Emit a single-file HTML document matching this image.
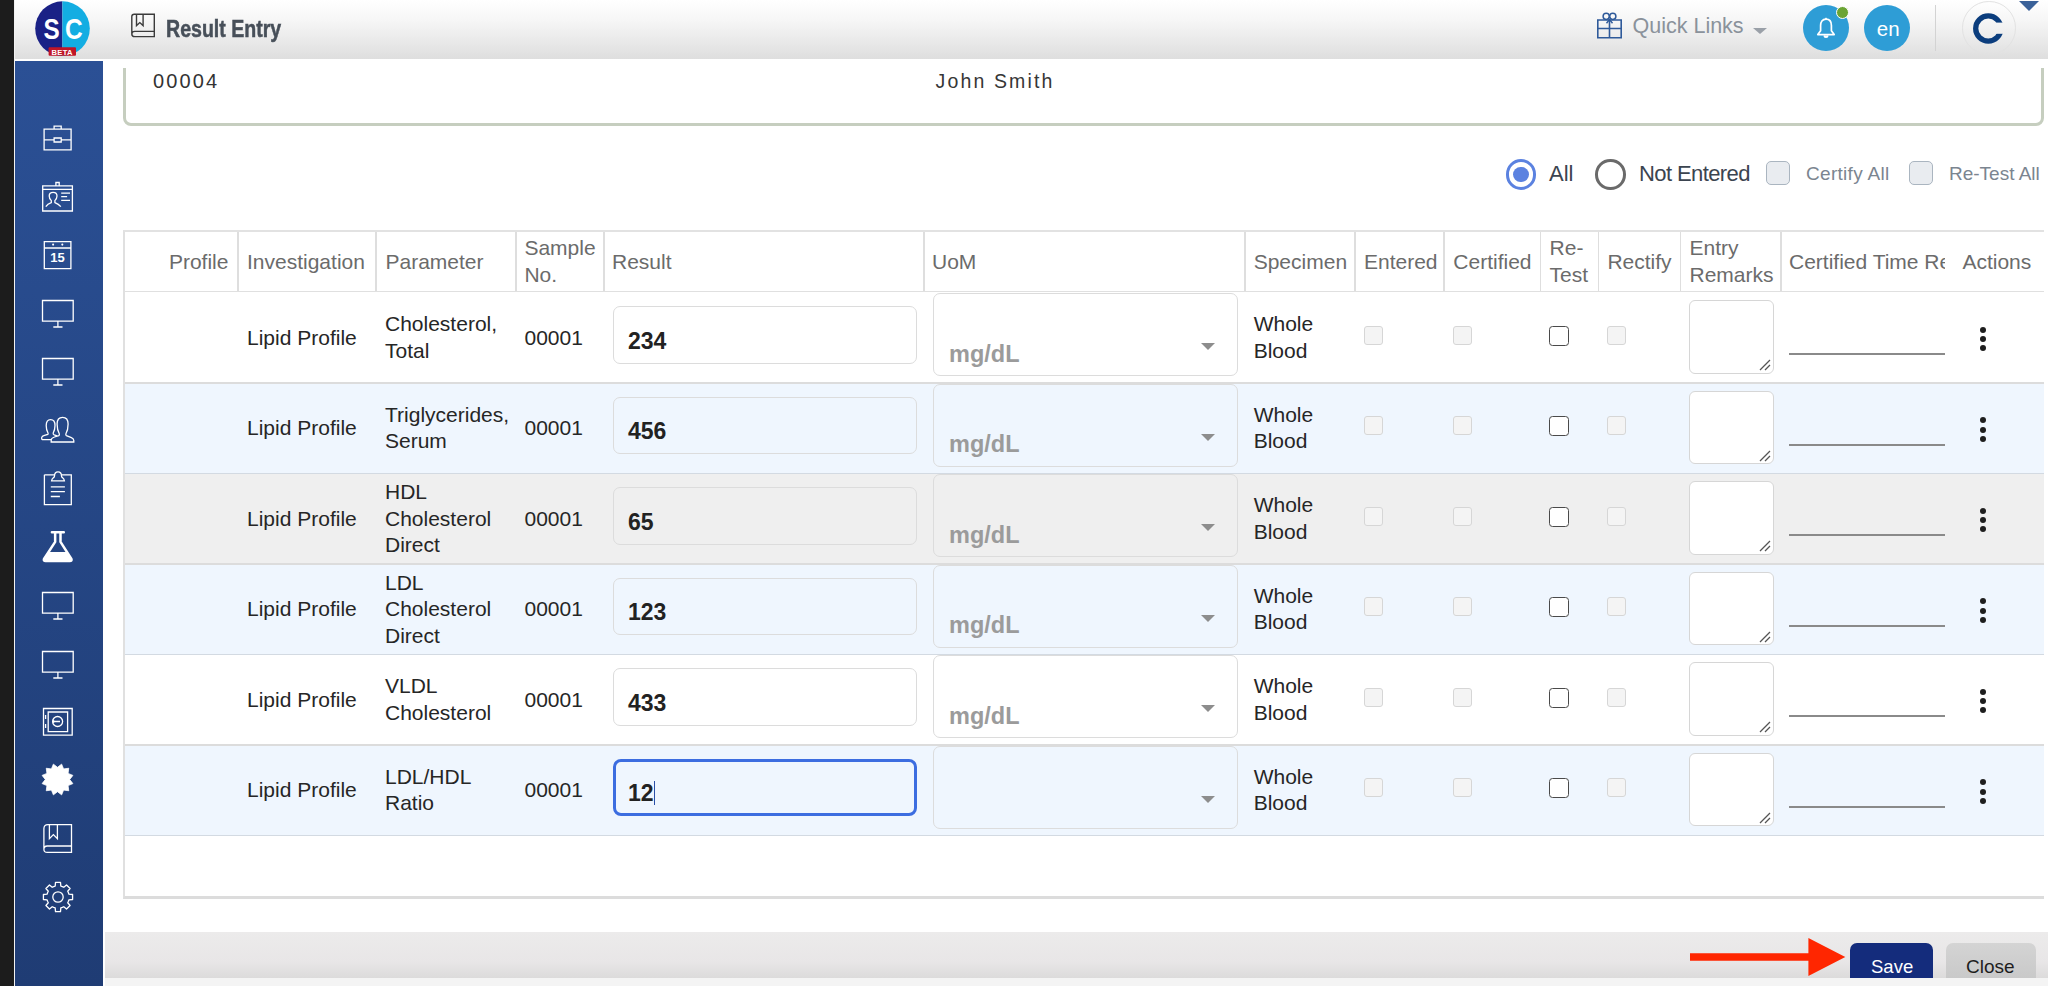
<!DOCTYPE html>
<html><head><meta charset="utf-8"><title>Result Entry</title>
<style>
*{box-sizing:border-box;margin:0;padding:0}
html,body{width:2048px;height:986px;overflow:hidden;background:#fff;font-family:"Liberation Sans",sans-serif;}
.a{position:absolute}
.t{position:absolute;white-space:nowrap;font-size:21px;line-height:26.4px;color:#262626}
.h{color:#6b6b6b;line-height:27px}
.vl{position:absolute;top:232px;width:1.6px;height:59px;background:#dedede}
.cbd{position:absolute;width:19px;height:19px;border:1.5px solid #d6d6d6;background:#f4f4f4;border-radius:3px}
.cbe{position:absolute;width:20px;height:20px;border:1.7px solid #4a4a4a;background:#fff;border-radius:3.5px}
.inp{position:absolute;left:612.5px;width:304.5px;height:57.5px;border:1.5px solid #dcdcdc;border-radius:7px}
.sel{position:absolute;left:933px;width:304.5px;height:83px;border:1.5px solid #dcdcdc;border-radius:7px}
.ta{position:absolute;left:1689px;width:84.5px;height:73.5px;border:1.7px solid #d6d6d6;border-radius:6px;background:#fff}
.ul{position:absolute;left:1789px;width:156px;height:2px;background:#8a8a8a}
.dot{position:absolute;width:6px;height:6px;border-radius:50%;background:#1e1e1e}
.tri{position:absolute;width:0;height:0;border-left:7.5px solid transparent;border-right:7.5px solid transparent;border-top:7.5px solid #8d8d8d}
.ic{position:absolute;left:57.5px}
</style></head><body>

<div class="a" style="left:0;top:0;width:14px;height:986px;background:#1c1c1c"></div>
<div class="a" style="left:14px;top:0;width:1px;height:986px;background:#f2f2f2"></div>
<div class="a" style="left:15px;top:61px;width:88px;height:925px;background:linear-gradient(#2b5095,#1f3c74)"></div>
<div class="a" style="left:123px;top:40px;width:1921px;height:86px;border:3px solid #c6cebf;border-radius:8px"></div>
<div class="a" style="left:103px;top:59px;width:1945px;height:9px;background:#fff"></div>
<div class="t" style="left:153px;top:67.5px;font-size:20px;letter-spacing:2.1px;color:#333">00004</div>
<div class="t" style="left:935.5px;top:68.2px;font-size:19.5px;letter-spacing:2.15px;color:#363636">John Smith</div>
<div class="a" style="left:15px;top:0;width:2033px;height:59px;background:linear-gradient(#ffffff 0%,#f6f6f6 35%,#dedede 100%)"></div>
<div class="a" style="left:1505.5px;top:159px;width:30.5px;height:30.5px;border:3px solid #5b82e0;border-radius:50%"></div>
<div class="a" style="left:1513px;top:166.5px;width:15.5px;height:15.5px;background:#5b82e0;border-radius:50%"></div>
<div class="t" style="left:1549px;top:160px;font-size:22px;line-height:27px;color:#3b4450">All</div>
<div class="a" style="left:1595px;top:159px;width:30.5px;height:30.5px;border:3px solid #6a6a6a;border-radius:50%"></div>
<div class="t" style="left:1639px;top:160px;font-size:22px;line-height:27px;color:#3b4450;letter-spacing:-0.6px">Not Entered</div>
<div class="a" style="left:1765.5px;top:160.5px;width:24px;height:24px;border:1.6px solid #aab5c0;background:#e9ecf0;border-radius:5px"></div>
<div class="t" style="left:1806px;top:161.5px;font-size:19px;line-height:24px;color:#7b8590;letter-spacing:0.3px">Certify All</div>
<div class="a" style="left:1909px;top:160.5px;width:24px;height:24px;border:1.6px solid #aab5c0;background:#e9ecf0;border-radius:5px"></div>
<div class="t" style="left:1949px;top:161.5px;font-size:19px;line-height:24px;color:#7b8590;letter-spacing:0px">Re-Test All</div>
<div class="a" style="left:123px;top:230px;width:1920.5px;height:669px;border-left:2px solid #e0e0e0;border-top:2px solid #e2e2e2;border-bottom:3px solid #dcdcdc"></div>
<div class="a" style="left:125px;top:290.5px;width:1918.5px;height:2px;background:#e0e0e0"></div>
<div class="vl" style="left:237px"></div>
<div class="vl" style="left:375px"></div>
<div class="vl" style="left:515px"></div>
<div class="vl" style="left:603px"></div>
<div class="vl" style="left:923px"></div>
<div class="vl" style="left:1244px"></div>
<div class="vl" style="left:1354px"></div>
<div class="vl" style="left:1443px"></div>
<div class="vl" style="left:1539.5px"></div>
<div class="vl" style="left:1597.5px"></div>
<div class="vl" style="left:1679.5px"></div>
<div class="vl" style="left:1780px"></div>
<div class="t h" style="left:168.9px;top:248.2px">Profile</div>
<div class="t h" style="left:247px;top:248.2px">Investigation</div>
<div class="t h" style="left:385.5px;top:248.2px">Parameter</div>
<div class="t h" style="left:524.4px;top:234.0px">Sample<br>No.</div>
<div class="t h" style="left:612px;top:248.2px">Result</div>
<div class="t h" style="left:932px;top:248.2px">UoM</div>
<div class="t h" style="left:1253.7px;top:248.2px">Specimen</div>
<div class="t h" style="left:1364px;top:248.2px">Entered</div>
<div class="t h" style="left:1453.3px;top:248.2px">Certified</div>
<div class="t h" style="left:1549.6px;top:234.0px">Re-<br>Test</div>
<div class="t h" style="left:1607.4px;top:248.2px">Rectify</div>
<div class="t h" style="left:1689.5px;top:234.0px">Entry<br>Remarks</div>
<div class="t h" style="left:1962.4px;top:248.2px">Actions</div>
<div class="t h" style="left:1789px;top:248.2px;width:156px;overflow:hidden">Certified Time Remarks</div>
<div class="a" style="left:125px;top:291.80px;width:1918.5px;height:90.52px;background:#ffffff"></div>
<div class="a" style="left:125px;top:382.02px;width:1918.5px;height:1.6px;z-index:2;background:#dcdcdc"></div>
<div class="t" style="left:247px;top:324.56px">Lipid Profile</div>
<div class="t" style="left:385px;top:311.36px">Cholesterol,<br>Total</div>
<div class="t" style="left:524.5px;top:324.56px">00001</div>
<div class="inp" style="top:306.10px"></div>
<div class="t" style="left:628px;top:325.80px;font-size:23px;line-height:30px;font-weight:700;color:#222">234</div>
<div class="sel" style="top:293.30px"></div>
<div class="t" style="left:949px;top:338.80px;font-size:23.5px;line-height:30px;font-weight:700;color:#9b9b9b">mg/dL</div>
<div class="tri" style="left:1201px;top:343.10px"></div>
<div class="t" style="left:1253.7px;top:311.36px">Whole<br>Blood</div>
<div class="cbd" style="left:1364px;top:325.50px"></div>
<div class="cbd" style="left:1453px;top:325.50px"></div>
<div class="cbe" style="left:1549px;top:325.50px"></div>
<div class="cbd" style="left:1607px;top:325.50px"></div>
<div class="ta" style="top:300.20px"><svg class="a" style="left:69px;top:58px" width="12" height="12" viewBox="0 0 12 12"><path d="M1 11L11 1M6 11L11 6" stroke="#555" stroke-width="1.3"/></svg></div>
<div class="ul" style="top:353.30px"></div>
<div class="dot" style="left:1979.6px;top:326.80px"></div>
<div class="dot" style="left:1979.6px;top:336.00px"></div>
<div class="dot" style="left:1979.6px;top:345.20px"></div>
<div class="a" style="left:125px;top:382.32px;width:1918.5px;height:90.52px;background:#eff6fe"></div>
<div class="a" style="left:125px;top:472.54px;width:1918.5px;height:1.6px;z-index:2;background:#d3dae2"></div>
<div class="t" style="left:247px;top:415.08px">Lipid Profile</div>
<div class="t" style="left:385px;top:401.88px">Triglycerides,<br>Serum</div>
<div class="t" style="left:524.5px;top:415.08px">00001</div>
<div class="inp" style="top:396.62px"></div>
<div class="t" style="left:628px;top:416.32px;font-size:23px;line-height:30px;font-weight:700;color:#222">456</div>
<div class="sel" style="top:383.82px"></div>
<div class="t" style="left:949px;top:429.32px;font-size:23.5px;line-height:30px;font-weight:700;color:#9b9b9b">mg/dL</div>
<div class="tri" style="left:1201px;top:433.62px"></div>
<div class="t" style="left:1253.7px;top:401.88px">Whole<br>Blood</div>
<div class="cbd" style="left:1364px;top:416.02px"></div>
<div class="cbd" style="left:1453px;top:416.02px"></div>
<div class="cbe" style="left:1549px;top:416.02px"></div>
<div class="cbd" style="left:1607px;top:416.02px"></div>
<div class="ta" style="top:390.72px"><svg class="a" style="left:69px;top:58px" width="12" height="12" viewBox="0 0 12 12"><path d="M1 11L11 1M6 11L11 6" stroke="#555" stroke-width="1.3"/></svg></div>
<div class="ul" style="top:443.82px"></div>
<div class="dot" style="left:1979.6px;top:417.32px"></div>
<div class="dot" style="left:1979.6px;top:426.52px"></div>
<div class="dot" style="left:1979.6px;top:435.72px"></div>
<div class="a" style="left:125px;top:472.84px;width:1918.5px;height:90.52px;background:#efefef"></div>
<div class="a" style="left:125px;top:563.06px;width:1918.5px;height:1.6px;z-index:2;background:#dcdcdc"></div>
<div class="t" style="left:247px;top:505.60px">Lipid Profile</div>
<div class="t" style="left:385px;top:479.20px">HDL<br>Cholesterol<br>Direct</div>
<div class="t" style="left:524.5px;top:505.60px">00001</div>
<div class="inp" style="top:487.14px"></div>
<div class="t" style="left:628px;top:506.84px;font-size:23px;line-height:30px;font-weight:700;color:#222">65</div>
<div class="sel" style="top:474.34px"></div>
<div class="t" style="left:949px;top:519.84px;font-size:23.5px;line-height:30px;font-weight:700;color:#9b9b9b">mg/dL</div>
<div class="tri" style="left:1201px;top:524.14px"></div>
<div class="t" style="left:1253.7px;top:492.40px">Whole<br>Blood</div>
<div class="cbd" style="left:1364px;top:506.54px"></div>
<div class="cbd" style="left:1453px;top:506.54px"></div>
<div class="cbe" style="left:1549px;top:506.54px"></div>
<div class="cbd" style="left:1607px;top:506.54px"></div>
<div class="ta" style="top:481.24px"><svg class="a" style="left:69px;top:58px" width="12" height="12" viewBox="0 0 12 12"><path d="M1 11L11 1M6 11L11 6" stroke="#555" stroke-width="1.3"/></svg></div>
<div class="ul" style="top:534.34px"></div>
<div class="dot" style="left:1979.6px;top:507.84px"></div>
<div class="dot" style="left:1979.6px;top:517.04px"></div>
<div class="dot" style="left:1979.6px;top:526.24px"></div>
<div class="a" style="left:125px;top:563.36px;width:1918.5px;height:90.52px;background:#eff6fe"></div>
<div class="a" style="left:125px;top:653.58px;width:1918.5px;height:1.6px;z-index:2;background:#d3dae2"></div>
<div class="t" style="left:247px;top:596.12px">Lipid Profile</div>
<div class="t" style="left:385px;top:569.72px">LDL<br>Cholesterol<br>Direct</div>
<div class="t" style="left:524.5px;top:596.12px">00001</div>
<div class="inp" style="top:577.66px"></div>
<div class="t" style="left:628px;top:597.36px;font-size:23px;line-height:30px;font-weight:700;color:#222">123</div>
<div class="sel" style="top:564.86px"></div>
<div class="t" style="left:949px;top:610.36px;font-size:23.5px;line-height:30px;font-weight:700;color:#9b9b9b">mg/dL</div>
<div class="tri" style="left:1201px;top:614.66px"></div>
<div class="t" style="left:1253.7px;top:582.92px">Whole<br>Blood</div>
<div class="cbd" style="left:1364px;top:597.06px"></div>
<div class="cbd" style="left:1453px;top:597.06px"></div>
<div class="cbe" style="left:1549px;top:597.06px"></div>
<div class="cbd" style="left:1607px;top:597.06px"></div>
<div class="ta" style="top:571.76px"><svg class="a" style="left:69px;top:58px" width="12" height="12" viewBox="0 0 12 12"><path d="M1 11L11 1M6 11L11 6" stroke="#555" stroke-width="1.3"/></svg></div>
<div class="ul" style="top:624.86px"></div>
<div class="dot" style="left:1979.6px;top:598.36px"></div>
<div class="dot" style="left:1979.6px;top:607.56px"></div>
<div class="dot" style="left:1979.6px;top:616.76px"></div>
<div class="a" style="left:125px;top:653.88px;width:1918.5px;height:90.52px;background:#ffffff"></div>
<div class="a" style="left:125px;top:744.10px;width:1918.5px;height:1.6px;z-index:2;background:#dcdcdc"></div>
<div class="t" style="left:247px;top:686.64px">Lipid Profile</div>
<div class="t" style="left:385px;top:673.44px">VLDL<br>Cholesterol</div>
<div class="t" style="left:524.5px;top:686.64px">00001</div>
<div class="inp" style="top:668.18px"></div>
<div class="t" style="left:628px;top:687.88px;font-size:23px;line-height:30px;font-weight:700;color:#222">433</div>
<div class="sel" style="top:655.38px"></div>
<div class="t" style="left:949px;top:700.88px;font-size:23.5px;line-height:30px;font-weight:700;color:#9b9b9b">mg/dL</div>
<div class="tri" style="left:1201px;top:705.18px"></div>
<div class="t" style="left:1253.7px;top:673.44px">Whole<br>Blood</div>
<div class="cbd" style="left:1364px;top:687.58px"></div>
<div class="cbd" style="left:1453px;top:687.58px"></div>
<div class="cbe" style="left:1549px;top:687.58px"></div>
<div class="cbd" style="left:1607px;top:687.58px"></div>
<div class="ta" style="top:662.28px"><svg class="a" style="left:69px;top:58px" width="12" height="12" viewBox="0 0 12 12"><path d="M1 11L11 1M6 11L11 6" stroke="#555" stroke-width="1.3"/></svg></div>
<div class="ul" style="top:715.38px"></div>
<div class="dot" style="left:1979.6px;top:688.88px"></div>
<div class="dot" style="left:1979.6px;top:698.08px"></div>
<div class="dot" style="left:1979.6px;top:707.28px"></div>
<div class="a" style="left:125px;top:744.40px;width:1918.5px;height:90.52px;background:#eff6fe"></div>
<div class="a" style="left:125px;top:834.62px;width:1918.5px;height:1.6px;z-index:2;background:#d3dae2"></div>
<div class="t" style="left:247px;top:777.16px">Lipid Profile</div>
<div class="t" style="left:385px;top:763.96px">LDL/HDL<br>Ratio</div>
<div class="t" style="left:524.5px;top:777.16px">00001</div>
<div class="inp" style="top:758.70px;border:3px solid #3c6de0;border-radius:8px"></div>
<div class="t" style="left:628px;top:778.40px;font-size:23px;line-height:30px;font-weight:700;color:#222">12</div>
<div class="a" style="left:653.5px;top:781.40px;width:1.5px;height:24px;background:#2a4fa8"></div>
<div class="sel" style="top:745.90px"></div>
<div class="tri" style="left:1201px;top:795.70px"></div>
<div class="t" style="left:1253.7px;top:763.96px">Whole<br>Blood</div>
<div class="cbd" style="left:1364px;top:778.10px"></div>
<div class="cbd" style="left:1453px;top:778.10px"></div>
<div class="cbe" style="left:1549px;top:778.10px"></div>
<div class="cbd" style="left:1607px;top:778.10px"></div>
<div class="ta" style="top:752.80px"><svg class="a" style="left:69px;top:58px" width="12" height="12" viewBox="0 0 12 12"><path d="M1 11L11 1M6 11L11 6" stroke="#555" stroke-width="1.3"/></svg></div>
<div class="ul" style="top:805.90px"></div>
<div class="dot" style="left:1979.6px;top:779.40px"></div>
<div class="dot" style="left:1979.6px;top:788.60px"></div>
<div class="dot" style="left:1979.6px;top:797.80px"></div>
<div class="a" style="left:104.5px;top:932px;width:1943.5px;height:46px;background:linear-gradient(#ecebeb,#e8e6e7 65%,#dcdbdb)"></div>
<div class="a" style="left:104.5px;top:978px;width:1943.5px;height:8px;background:#f4f4f4"></div>
<div class="a" style="left:1850px;top:943px;width:83px;height:35px;background:#142c7c;border-radius:7px 7px 0 0"></div>
<div class="t" style="left:1871px;top:954.5px;font-size:18.5px;line-height:24px;color:#fff">Save</div>
<div class="a" style="left:1945.5px;top:943px;width:90px;height:35px;background:linear-gradient(#d4d4d4,#c9c9c9);border-radius:7px 7px 0 0"></div>
<div class="t" style="left:1966px;top:954.5px;font-size:19px;line-height:24px;color:#1e1e1e">Close</div>
<svg class="a" style="left:1680px;top:930px" width="175" height="50" viewBox="0 0 175 50"><path d="M10 23.2H128.4V8L165.3 27L128.4 46V30.8H10Z" fill="#ff2600"/></svg>
<svg class="a" style="left:34px;top:0px" width="56" height="58" viewBox="0 0 56 58">
<defs><clipPath id="lc"><circle cx="28.5" cy="28.6" r="27.3"/></clipPath></defs>
<g clip-path="url(#lc)"><rect x="0" y="0" width="28.4" height="58" fill="#1a2186"/><rect x="28.4" y="0" width="28" height="58" fill="#13ade2"/></g>
<text x="9.6" y="38.8" font-family="Liberation Sans" font-weight="700" font-size="30" fill="#fff" textLength="16.2" lengthAdjust="spacingAndGlyphs">S</text>
<text x="30.9" y="38.8" font-family="Liberation Sans" font-weight="700" font-size="30" fill="#fff" textLength="17.7" lengthAdjust="spacingAndGlyphs">C</text>
<rect x="14.6" y="47.2" width="27.4" height="8.6" fill="#c01628" rx="1"/>
<text x="28.2" y="54.6" font-family="Liberation Sans" font-weight="700" font-size="7.6" fill="#fff" text-anchor="middle" letter-spacing="0.3">BETA</text>
</svg>
<svg class="a" style="left:130px;top:13px" width="26" height="25" viewBox="0 0 26 25">
<path d="M1.8 20.6V3.6Q1.8 1.2 4.2 1.2H24.3V23.6H4.8Q1.8 23.6 1.8 20.9Q1.8 18.4 4.8 18.4H24.3" fill="none" stroke="#3b3b3b" stroke-width="1.4"/>
<path d="M6.5 1.2V12.6L9.8 9.6L13.1 12.6V1.2" fill="none" stroke="#3b3b3b" stroke-width="1.4"/>
</svg>
<div class="t" style="left:166.2px;top:14.6px;font-size:24px;line-height:27px;font-weight:700;color:#474f59;-webkit-text-stroke:0.5px #474f59;transform:scaleX(0.815);transform-origin:0 0">Result Entry</div>
<svg class="a" style="left:1596px;top:12px" width="27" height="28" viewBox="0 0 27 28">
<path d="M1.8 8H25.2V25.8H1.8ZM1.8 16.5H25.2M13.5 8V25.8" fill="none" stroke="#2f5a9a" stroke-width="1.6"/>
<circle cx="10.2" cy="4.3" r="3.1" fill="none" stroke="#2f5a9a" stroke-width="1.5"/>
<circle cx="16.8" cy="4.3" r="3.1" fill="none" stroke="#2f5a9a" stroke-width="1.5"/>
<path d="M13.5 7.5L10.5 11.2M13.5 7.5L16.5 11.2" stroke="#2f5a9a" stroke-width="1.4"/>
</svg>
<div class="t" style="left:1632.5px;top:13px;font-size:21.5px;line-height:27px;color:#8a929b">Quick Links</div>
<div class="tri" style="left:1752.8px;top:28px;border-left-width:7px;border-right-width:7px;border-top:6.5px solid #9aa0a8"></div>
<div class="a" style="left:1803px;top:5px;width:46px;height:46px;border-radius:50%;background:#2e9dd6"></div>
<svg class="a" style="left:1814px;top:16px" width="24" height="24" viewBox="0 0 24 24">
<path d="M12 3.2C8.3 3.2 6.6 6 6.6 9.6V14.8L3.8 18.6H20.2L17.4 14.8V9.6C17.4 6 15.7 3.2 12 3.2Z" fill="none" stroke="#fff" stroke-width="1.7" stroke-linejoin="round"/>
<path d="M10.2 19.5A1.8 1.8 0 0 0 13.8 19.5" fill="#fff" stroke="#fff" stroke-width="1.4"/>
<rect x="11.2" y="1.8" width="1.6" height="2" fill="#fff"/>
</svg>
<div class="a" style="left:1836px;top:5.8px;width:13px;height:13px;border-radius:50%;background:#6ba434;border:1.5px solid #fff"></div>
<div class="a" style="left:1864px;top:5px;width:46px;height:46px;border-radius:50%;background:#2e9dd6"></div>
<div class="t" style="left:1876.8px;top:15px;font-size:20.5px;line-height:27px;color:#fff">en</div>
<div class="a" style="left:1934.5px;top:5px;width:1.5px;height:46px;background:#d3d3d3"></div>
<div class="a" style="left:1962px;top:1px;width:53.5px;height:53.5px;border-radius:50%;border:1px solid #e2e2e2"></div>
<svg class="a" style="left:1968px;top:8px" width="40" height="42" viewBox="0 0 40 42"><defs><mask id="cm"><rect width="40" height="42" fill="#fff"/><rect x="21" y="14.6" width="19" height="11.2" fill="#000"/></mask></defs><circle cx="20.3" cy="20.5" r="12.6" fill="none" stroke="#0b3d7d" stroke-width="5.3" mask="url(#cm)"/></svg>
<div class="a" style="left:2018.5px;top:0.5px;width:0;height:0;border-left:10.2px solid transparent;border-right:10.2px solid transparent;border-top:10.5px solid #3a6199"></div>
<svg class="a" style="left:43px;top:124px" width="32" height="28" viewBox="0 0 32 28"><path d="M1.1 5.2H28.1V25.9H1.1ZM1.1 15.9H11.1M18.2 15.9H28.1M11.1 14H18.2V18H11.1ZM11.1 5.2V2.1H18.2V5.2" fill="none" stroke="#fff" stroke-width="1.3"/></svg>
<svg class="a" style="left:42px;top:181px" width="32" height="32" viewBox="0 0 32 32"><path d="M0.7 4.8H30.4V30H0.7ZM0.7 8.4H30.4M13.9 4.8V1.5H17.2V4.8" fill="none" stroke="#fff" stroke-width="1.3"/>
<path d="M3.8 25.7Q5.5 23 9.3 21.6V19.6Q7.2 17.5 7.2 15Q7.2 11.3 11.1 11.3Q15 11.3 15 15Q15 17.5 12.9 19.6V21.6Q16.7 23 18.8 25.7M19.2 12.1H28M19.2 15.7H25.1M19.2 19.4H28" fill="none" stroke="#fff" stroke-width="1.3"/></svg>
<svg class="a" style="left:42px;top:239px" width="32" height="32" viewBox="0 0 32 32"><path d="M2.3 2.7H28.9V29.7H2.3ZM2.3 9H28.9" fill="none" stroke="#fff" stroke-width="1.3"/><circle cx="11.1" cy="5.6" r="1.05" fill="#fff"/><circle cx="20.3" cy="5.6" r="1.05" fill="#fff"/>
<text x="15.6" y="23.3" font-family="Liberation Sans" font-weight="700" font-size="13" fill="#fff" text-anchor="middle">15</text></svg>
<svg class="a" style="left:41px;top:299px" width="34" height="30" viewBox="0 0 34 30"><path d="M1.5 1.5H32.2V22.2H1.5ZM16.9 22.2V28M12.3 28H21.5" fill="none" stroke="#fff" stroke-width="1.3"/></svg>
<svg class="a" style="left:41px;top:357px" width="34" height="30" viewBox="0 0 34 30"><path d="M1.5 1.5H32.2V22.2H1.5ZM16.9 22.2V28M12.3 28H21.5" fill="none" stroke="#fff" stroke-width="1.3"/></svg>
<svg class="a" style="left:41px;top:416px" width="34" height="28" viewBox="0 0 34 28"><path d="M10.2 23.6H1.8Q0.7 23.6 0.7 22.4V21.5Q0.9 20 3.5 19.3L6.8 18.4Q7.4 18 7 17Q5.2 14 5.2 9.5Q5.2 3.7 9.6 3.7Q14 3.7 14 9.5Q14 14 12.2 17Q11.8 18.2 13.2 18.8L16.2 19.8" fill="none" stroke="#fff" stroke-width="1.3"/>
<path d="M10.2 26V23.8Q10.4 22 13.5 21L17.8 19.6Q18.8 19 18.2 17.5Q16.1 14 16.1 8Q16.1 1.3 21.6 1.3Q27.1 1.3 27.1 8Q27.1 14 25 17.5Q24.4 19 25.4 19.6L30.4 21.6Q32.8 22.6 32.8 24.6V26Z" fill="none" stroke="#fff" stroke-width="1.3"/></svg>
<svg class="a" style="left:42px;top:471px" width="32" height="36" viewBox="0 0 32 36"><path d="M2.4 3.8H12.2M19.8 3.8H29.3V33.7H2.4V3.8" fill="none" stroke="#fff" stroke-width="1.3"/><path d="M9.6 9.8H22.4Q22.2 8 20.4 6.6Q19.5 6 19.5 5Q19.5 0.8 16 0.8Q12.5 0.8 12.5 5Q12.5 6 11.6 6.6Q9.8 8 9.6 9.8Z" fill="none" stroke="#fff" stroke-width="1.3"/>
<path d="M8.8 15.9H22.9M8.8 20.7H22.9M8.8 25.5H17.9" fill="none" stroke="#fff" stroke-width="1.3"/></svg>
<svg class="a" style="left:42px;top:529px" width="32" height="35" viewBox="0 0 32 35"><path d="M9.9 3.3H21.8M13.15 3.3V12.9L2 30Q1.2 32 3.6 32H27.8Q30.2 32 29.4 30L18.5 12.9V3.3" fill="none" stroke="#fff" stroke-width="2.5" stroke-linecap="round" stroke-linejoin="round"/>
<path d="M6.6 22.9H24.9L29.4 30Q30.2 32 27.8 32H3.6Q1.2 32 2 30Z" fill="#fff"/></svg>
<svg class="a" style="left:41px;top:591px" width="34" height="30" viewBox="0 0 34 30"><path d="M1.5 1.5H32.2V22.2H1.5ZM16.9 22.2V28M12.3 28H21.5" fill="none" stroke="#fff" stroke-width="1.3"/></svg>
<svg class="a" style="left:41px;top:650px" width="34" height="30" viewBox="0 0 34 30"><path d="M1.5 1.5H32.2V22.2H1.5ZM16.9 22.2V28M12.3 28H21.5" fill="none" stroke="#fff" stroke-width="1.3"/></svg>
<svg class="a" style="left:42px;top:707px" width="32" height="30" viewBox="0 0 32 30"><path d="M1.5 1.5H30.2V28.2H1.5ZM6.2 5H25.6V24.6H6.2ZM3.6 8V12M3.6 17V21" fill="none" stroke="#fff" stroke-width="1.3"/><circle cx="15.6" cy="14.5" r="5" fill="none" stroke="#fff" stroke-width="1.3"/><path d="M10.6 14.5H18M10.6 14.5L12.2 13.4M10.6 14.5L12.2 15.6" fill="none" stroke="#fff" stroke-width="1.3"/></svg>
<svg class="a" style="left:41.3px;top:763.2px" width="33" height="33" viewBox="0 0 33 33"><polygon points="20.62,1.14 22.60,5.93 27.74,5.26 27.07,10.40 31.86,12.38 28.70,16.50 31.86,20.62 27.07,22.60 27.74,27.74 22.60,27.07 20.62,31.86 16.50,28.70 12.38,31.86 10.40,27.07 5.26,27.74 5.93,22.60 1.14,20.62 4.30,16.50 1.14,12.38 5.93,10.40 5.26,5.26 10.40,5.93 12.38,1.14 16.50,4.30" fill="#fff" stroke="#fff" stroke-width="0.8" stroke-linejoin="round"/></svg>
<svg class="a" style="left:42px;top:823px" width="32" height="32" viewBox="0 0 32 32"><path d="M1.9 26.2V5.6Q1.9 1.6 5.9 1.6H29.5V29.4H5.2Q1.9 29.4 1.9 26.2Q1.9 23 5.2 23H29.5" fill="none" stroke="#fff" stroke-width="1.3"/><path d="M7.4 1.6V15.7L11.4 11.6L15.4 15.7V1.6" fill="none" stroke="#fff" stroke-width="1.3"/></svg>
<svg class="a" style="left:41.6px;top:881px" width="32" height="32" viewBox="0 0 32 32"><polygon points="11.68,5.56 13.20,5.05 13.50,1.41 18.50,1.41 18.80,5.05 20.32,5.56 21.77,6.28 24.54,3.92 28.08,7.46 25.72,10.23 26.44,11.68 26.95,13.20 30.59,13.50 30.59,18.50 26.95,18.80 26.44,20.32 25.72,21.77 28.08,24.54 24.54,28.08 21.77,25.72 20.32,26.44 18.80,26.95 18.50,30.59 13.50,30.59 13.20,26.95 11.68,26.44 10.23,25.72 7.46,28.08 3.92,24.54 6.28,21.77 5.56,20.32 5.05,18.80 1.41,18.50 1.41,13.50 5.05,13.20 5.56,11.68 6.28,10.23 3.92,7.46 7.46,3.92 10.23,6.28" fill="none" stroke="#fff" stroke-width="1.3" stroke-linejoin="round"/><circle cx="16" cy="16" r="5.2" fill="none" stroke="#fff" stroke-width="1.3"/></svg>
</body></html>
